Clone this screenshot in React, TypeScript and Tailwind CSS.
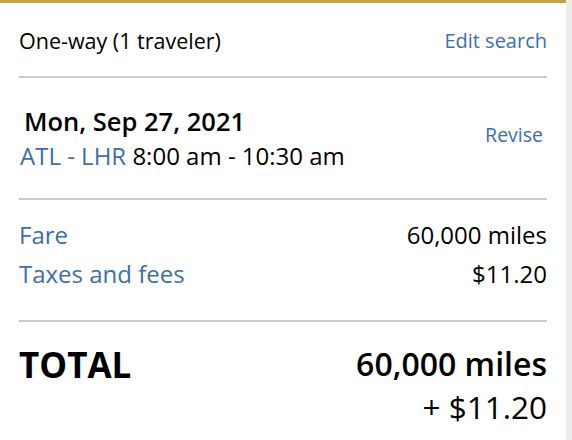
export default function App() {
  return (
    <div className="min-h-[440px] w-[572px] bg-[#ededed]" style={{ fontFamily: '"Open Sans", "Noto Sans", sans-serif' }}>
      <div className="min-h-[440px] w-[566px] border-t-[3px] border-[#c9a23f] bg-white px-[19px] text-black">
        <div className="flex items-center justify-between pt-[26px] pb-[23px] leading-[24px]">
          <span className="text-[21.5px]">One-way (1 traveler)</span>
          <a className="text-[20px] text-[#3c6eb0]">Edit search</a>
        </div>
        <div className="h-[2px] bg-[#cccccc]" />
        <div className="flex items-center justify-between pt-[26px] pb-[24px] pl-[5px]">
          <div>
            <div className="text-[25.5px] font-semibold leading-[34px]">Mon, Sep 27, 2021</div>
            <div className="-ml-[4px] text-[24px] leading-[36px]">
              <span className="text-[#3c6eb0]">ATL - LHR</span> 8:00 am - 10:30 am
            </div>
          </div>
          <a className="mr-[4px] -mt-[8px] text-[19.5px] text-[#3c6eb0]">Revise</a>
        </div>
        <div className="h-[2px] bg-[#cccccc]" />
        <div className="flex flex-col pt-[15px] pb-[27px] text-[24px] leading-[39px]">
          <div className="flex justify-between">
            <span className="text-[#3c6eb0]">Fare</span>
            <span>60,000 miles</span>
          </div>
          <div className="flex justify-between">
            <span className="text-[#3c6eb0]">Taxes and fees</span>
            <span>$11.20</span>
          </div>
        </div>
        <div className="h-[2px] bg-[#cccccc]" />
        <div className="flex justify-between pt-[22px]">
          <span className="text-[35px] font-bold leading-[42px]">TOTAL</span>
          <div className="text-right">
            <div className="text-[32px] font-semibold leading-[40px]">60,000 miles</div>
            <div className="text-[31.5px] leading-[46px]">+ $11.20</div>
          </div>
        </div>
      </div>
    </div>
  );
}
